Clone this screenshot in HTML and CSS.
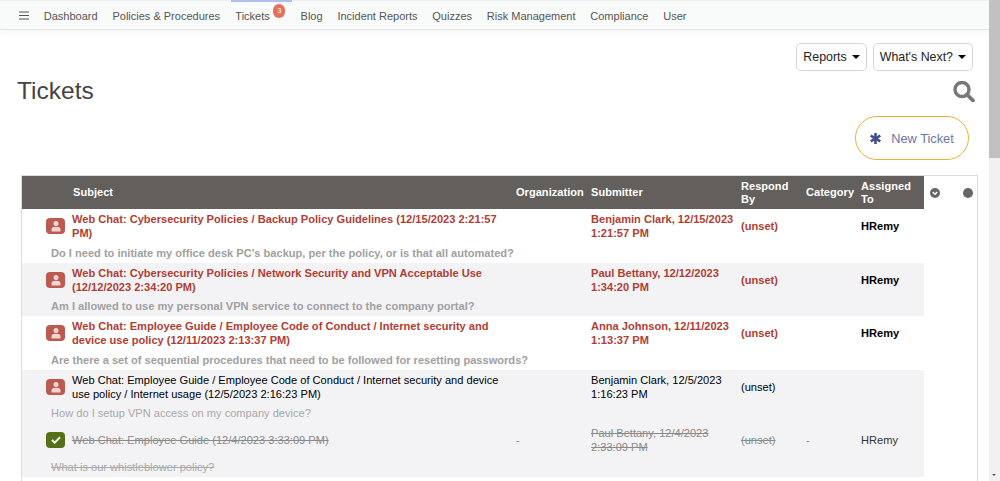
FILE: index.html
```html
<!DOCTYPE html>
<html lang="en">
<head>
<meta charset="utf-8">
<title>Tickets</title>
<link rel="stylesheet" href="styles.css">
</head>
<body>
<nav class="nav">
  <svg class="burger" width="10" height="9" viewBox="0 0 10 9"><path d="M0 1h10M0 4.500h10M0 8h10" stroke="#555" stroke-width="1.200" fill="none"/></svg>
  <a class="nav-link">Dashboard</a>
  <a class="nav-link">Policies &amp; Procedures</a>
  <a class="nav-link active">Tickets<span class="badge">3</span></a>
  <a class="nav-link">Blog</a>
  <a class="nav-link">Incident Reports</a>
  <a class="nav-link">Quizzes</a>
  <a class="nav-link">Risk Management</a>
  <a class="nav-link">Compliance</a>
  <a class="nav-link">User</a>
</nav>
<main class="page">
  <div class="actions">
    <button class="btn">Reports<span class="caret"></span></button>
    <button class="btn">What's Next?<span class="caret"></span></button>
  </div>
  <div class="title-row">
    <h1 class="title">Tickets</h1>
    <svg class="search" width="22" height="21" viewBox="0 0 22 21"><circle cx="9" cy="8.500" r="7" fill="none" stroke="#77787a" stroke-width="3.400"/><path d="M14 13.500l6 6" stroke="#77787a" stroke-width="3.800" stroke-linecap="round"/></svg>
  </div>
  <div class="new-row"><button class="new-ticket"><svg class="star" width="11" height="11" viewBox="0 0 11 11"><path d="M5.500 0v11M.7 2.700l9.600 5.600M.7 8.300l9.600-5.600" stroke="#434f8a" stroke-width="2.600"/></svg>New Ticket</button></div>
  <div class="table-box">
    <table class="tickets">
      <colgroup><col class="c-icon"><col class="c-subject"><col class="c-org"><col class="c-sub"><col class="c-resp"><col class="c-cat"><col class="c-asg"></colgroup>
      <thead><tr><th></th><th>Subject</th><th>Organization</th><th>Submitter</th><th>Respond By</th><th>Category</th><th>Assigned To</th></tr></thead>
      <tbody>
        <tr class="main urgent"><td class="ic"><span class="tag red"><svg width="12" height="12" viewBox="0 0 12 12"><circle cx="6" cy="3.500" r="2.500" fill="#f3d6d2"/><path d="M1.500 11.500V9.500C1.500 7.500 3 6.800 6 6.800s4.500.7 4.500 2.700v2z" fill="#f3d6d2"/></svg></span></td><td>Web Chat: Cybersecurity Policies / Backup Policy Guidelines (12/15/2023 2:21:57 PM)</td><td></td><td>Benjamin Clark, 12/15/2023 1:21:57 PM</td><td>(unset)</td><td></td><td class="asg">HRemy</td></tr>
        <tr class="desc bold"><td colspan="7">Do I need to initiate my office desk PC's backup, per the policy, or is that all automated?</td></tr>
        <tr class="main urgent alt"><td class="ic"><span class="tag red"><svg width="12" height="12" viewBox="0 0 12 12"><circle cx="6" cy="3.500" r="2.500" fill="#f3d6d2"/><path d="M1.500 11.500V9.500C1.500 7.500 3 6.800 6 6.800s4.500.7 4.500 2.700v2z" fill="#f3d6d2"/></svg></span></td><td>Web Chat: Cybersecurity Policies / Network Security and VPN Acceptable Use (12/12/2023 2:34:20 PM)</td><td></td><td>Paul Bettany, 12/12/2023 1:34:20 PM</td><td>(unset)</td><td></td><td class="asg">HRemy</td></tr>
        <tr class="desc bold alt"><td colspan="7">Am I allowed to use my personal VPN service to connect to the company portal?</td></tr>
        <tr class="main urgent"><td class="ic"><span class="tag red"><svg width="12" height="12" viewBox="0 0 12 12"><circle cx="6" cy="3.500" r="2.500" fill="#f3d6d2"/><path d="M1.500 11.500V9.500C1.500 7.500 3 6.800 6 6.800s4.500.7 4.500 2.700v2z" fill="#f3d6d2"/></svg></span></td><td>Web Chat: Employee Guide / Employee Code of Conduct / Internet security and device use policy (12/11/2023 2:13:37 PM)</td><td></td><td>Anna Johnson, 12/11/2023 1:13:37 PM</td><td>(unset)</td><td></td><td class="asg">HRemy</td></tr>
        <tr class="desc bold"><td colspan="7">Are there a set of sequential procedures that need to be followed for resetting passwords?</td></tr>
        <tr class="main alt"><td class="ic"><span class="tag red"><svg width="12" height="12" viewBox="0 0 12 12"><circle cx="6" cy="3.500" r="2.500" fill="#f3d6d2"/><path d="M1.500 11.500V9.500C1.500 7.500 3 6.800 6 6.800s4.500.7 4.500 2.700v2z" fill="#f3d6d2"/></svg></span></td><td>Web Chat: Employee Guide / Employee Code of Conduct / Internet security and device use policy / Internet usage (12/5/2023 2:16:23 PM)</td><td></td><td>Benjamin Clark, 12/5/2023 1:16:23 PM</td><td>(unset)</td><td></td><td></td></tr>
        <tr class="desc alt"><td colspan="7">How do I setup VPN access on my company device?</td></tr>
        <tr class="main closed alt"><td class="ic"><span class="tag green"><svg width="10" height="8" viewBox="0 0 10 8"><path d="M1 4l2.700 2.700L9 1.200" fill="none" stroke="#eef3e4" stroke-width="2"/></svg></span></td><td><s>Web Chat: Employee Guide (12/4/2023 3:33:09 PM)</s></td><td>-</td><td><s>Paul Bettany, 12/4/2023 2:33:09 PM</s></td><td><s>(unset)</s></td><td>-</td><td class="asg-plain">HRemy</td></tr>
        <tr class="desc closed alt"><td colspan="7"><s>What is our whistleblower policy?</s></td></tr>
      </tbody>
    </table>
    <div class="tools">
      <svg width="10" height="10" viewBox="0 0 10 10"><circle cx="5" cy="5" r="5" fill="#666"/><path d="M2.700 4l2.300 2.300L7.300 4" fill="none" stroke="#fff" stroke-width="1.500"/></svg>
      <span class="dot"></span>
    </div>
  </div>
</main>
<div class="scrollbar"><span class="thumb"></span><span class="arrow"></span></div>
</body>
</html>
```
FILE: styles.css
```css
* { box-sizing: border-box; }
html, body { margin: 0; height: 481px; overflow: hidden; }
body { background: #fff; font-family: "Liberation Sans", Arial, sans-serif; color: #000; }

.nav { height: 30px; display: flex; align-items: center; padding-left: 19px; gap: 14.800px; background: #f9fafa; border-top: 1px solid #f0f0f0; border-bottom: 1px solid #e4e4e6; box-shadow: 0 2px 8px rgba(0,0,0,.05); font-size: 11px; }
.nav-link { color: #555; position: relative; padding-top: 2px; white-space: nowrap; }
.active { margin-left: .5px; margin-right: 16px; }
.active::before { content: ""; position: absolute; left: -4px; right: -22px; top: -9px; height: 3px; background: #b3bcef; }
.badge { position: absolute; left: 38px; top: -4px; width: 12px; height: 14px; border-radius: 6px; background: #e2705a; color: #fff; font-size: 7px; line-height: 14px; text-align: center; }

.page { padding: 13px 27px 0 22px; position: relative; }
.actions { display: flex; justify-content: flex-end; gap: 6px; }
.btn { height: 28px; padding: 0 6px; background: #fff; border: 1px solid #d3d6de; border-radius: 5px; font: 12.400px "Liberation Sans", Arial, sans-serif; color: #222; display: flex; align-items: center; }
.caret { margin-left: 5px; border: 4px solid transparent; border-top-color: #000; border-bottom: 0; }
.title-row { display: flex; justify-content: space-between; align-items: flex-start; margin-top: 5px; margin-left: -5px; margin-right: -2px; height: 32px; }
.title { margin: 0; font-weight: 400; font-size: 24.500px; line-height: 30px; color: #444; }
.search { margin-top: 5px; }
.new-row { display: flex; justify-content: flex-end; margin-top: 8px; padding-right: 4px; }
.new-ticket { width: 114px; height: 44px; background: #fff; border: 1.500px solid #e8b23d; border-radius: 22px; color: #6c75a3; font: 12.800px "Liberation Sans", Arial, sans-serif; display: flex; align-items: center; justify-content: center; }
.star { margin-right: 10px; }

.table-box { margin: 15px 0 0 -1px; display: flex; align-items: flex-start; border: 1px solid #dcdde0; border-bottom: 0; width: 957px; height: 306px; }
.tickets { width: 902px; table-layout: fixed; border-collapse: collapse; font-size: 11.080px; line-height: 14px; }
.c-icon { width: 47px; } .c-subject { width: 444px; } .c-org { width: 75px; } .c-sub { width: 150px; } .c-resp { width: 65px; } .c-cat { width: 55px; } .c-asg { width: 66px; }
th { height: 33px; padding: 0 3px; background: #625f5c; color: #fff; font-size: 11px; font-weight: 700; text-align: left; line-height: 13px; letter-spacing: .05px; }
th:nth-child(2) { padding-left: 4px; }
.main td { height: 34px; padding: 0 4px 0 3px; vertical-align: middle; }
.main.urgent td { font-weight: 700; color: #b23d33; }
.main.urgent .asg { color: #000; }
.desc td { height: 19.500px; padding: 0 0 0 29px; color: #a8a8a8; vertical-align: middle; }
.desc.bold td { font-weight: 700; color: #a0a0a0; }
.alt td { background: #f3f3f6; }
.main .ic { text-align: left; padding: 0 0 0 24px; }
.tag { width: 19px; height: 16px; border-radius: 4px; display: inline-flex; align-items: center; justify-content: center; vertical-align: middle; }
.red { background: #bc5a51; }
.green { background: #557118; }
.main.closed td, .closed s { color: #8a8a8a; }
.desc.closed td, .desc.closed s { color: #aaa; }
.main.closed .asg-plain { color: #333; }
.tools { flex: 1; height: 33px; display: flex; justify-content: space-between; align-items: center; padding: 0 4px 0 6px; }
.dot { width: 10px; height: 10px; border-radius: 50%; background: #666; }

.scrollbar { position: fixed; top: 0; right: 0; width: 11px; height: 481px; background: #f1f1f1; }
.thumb { display: block; height: 158px; background: #c1c1c1; }
.arrow { position: absolute; bottom: 5px; left: 3px; border: 2.500px solid transparent; border-top-color: #555; border-bottom: 0; }
```
